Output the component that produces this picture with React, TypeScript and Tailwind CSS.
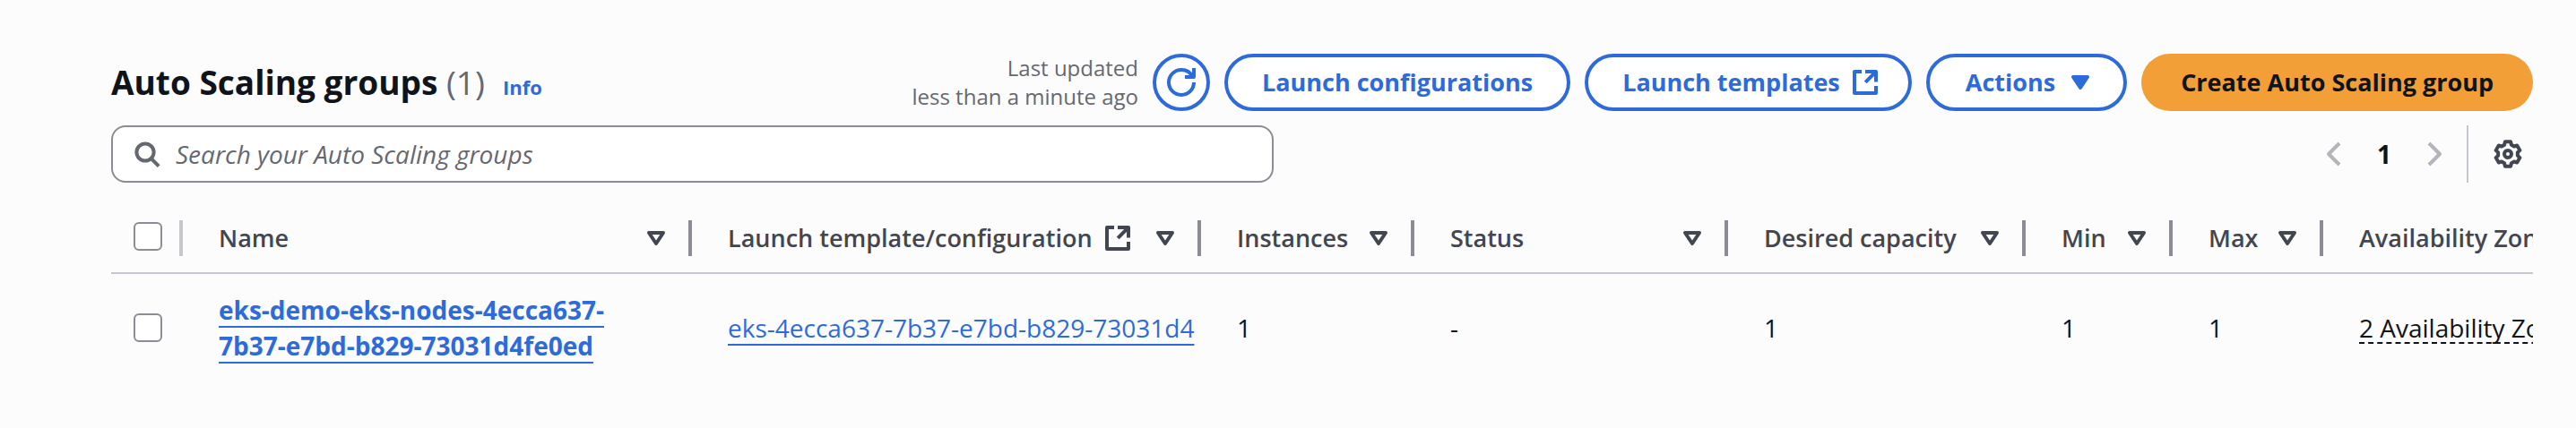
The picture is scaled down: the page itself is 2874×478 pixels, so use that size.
import type { ReactNode } from "react";

function Icon({ children, className = "" }: { children: ReactNode; className?: string }) {
  return (
    <svg
      viewBox="0 0 16 16"
      className={`size-8 shrink-0 ${className}`}
      fill="none"
      stroke="currentColor"
      strokeWidth="2"
      aria-hidden="true"
    >
      {children}
    </svg>
  );
}

const ExternalIcon = () => (
  <Icon>
    <path d="M6 2H2v12h12v-4M8 2h6v5.7M14 2 8.1 7.9" strokeLinejoin="round" />
  </Icon>
);

const RefreshIcon = () => (
  <Icon>
    <path d="M10 5h5V0" strokeLinejoin="round" />
    <path d="M15 8a6.957 6.957 0 0 1-7 7 6.957 6.957 0 0 1-7-7 6.957 6.957 0 0 1 7-7 6.87 6.87 0 0 1 6.3 4" />
  </Icon>
);

const SearchIcon = () => (
  <Icon>
    <circle cx="7" cy="7" r="4.8" />
    <path d="m14.6 14.8-4.3-4.3" />
  </Icon>
);

const CaretFilled = () => (
  <Icon>
    <path d="M4 5h8l-4 6-4-6Z" fill="currentColor" strokeLinejoin="round" />
  </Icon>
);

const CaretOutline = () => (
  <Icon>
    <path d="M4 5h8l-4 6-4-6Z" strokeLinejoin="round" />
  </Icon>
);

const GEAR_POINTS = [0, 60, 120, 180, 240, 300]
  .flatMap((lobe) =>
    [
      [5.5, -21],
      [7, -13],
      [7, 13],
      [5.5, 21],
    ].map(([radius, offset]) => {
      const angle = ((lobe + offset) * Math.PI) / 180;
      return `${(8 + radius * Math.sin(angle)).toFixed(2)},${(8 - radius * Math.cos(angle)).toFixed(2)}`;
    }),
  )
  .join(" ");

const GearIcon = () => (
  <Icon>
    <polygon points={GEAR_POINTS} strokeLinejoin="round" />
    <circle cx="8" cy="8" r="2" />
  </Icon>
);

const buttonBase = "flex h-16 items-center rounded-full text-[27px] font-bold whitespace-nowrap";
const outlined = "border-4 border-[#2e6bda] bg-white text-[#2e6bda]";

const checkbox = "block size-8 shrink-0 appearance-none rounded-md border-2 border-[#8c8c94] bg-white";

const columns = [
  { label: "Name", width: "w-[568px]" },
  { label: "Launch template/configuration", width: "w-[568px]", external: true },
  { label: "Instances", width: "w-[238px]" },
  { label: "Status", width: "w-[350px]" },
  { label: "Desired capacity", width: "w-[332px]" },
  { label: "Min", width: "w-[164px]" },
  { label: "Max", width: "w-[168px]" },
  { label: "Availability Zones", width: "w-[420px]" },
];

const cell = "py-5 pl-10 align-middle";

export default function App() {
  return (
    <main className="min-h-screen bg-[#fcfcfc] pt-[60px] pr-12 pb-12 pl-[124px] font-['Open_Sans','Noto_Sans',sans-serif] text-[28px] leading-10 text-[#0f141a]">
      <header className="flex items-center justify-between">
        <div className="flex items-baseline">
          <h1 className="text-[37px] leading-[48px] font-bold">
            Auto Scaling groups <span className="font-medium text-[#656871]">(1)</span>
          </h1>
          <a href="#info" className="ml-5 text-[22px] font-bold text-[#2e6bda]">
            Info
          </a>
        </div>
        <div className="flex items-center gap-4">
          <p className="text-right text-2xl leading-8 text-[#656871]">
            Last updated
            <br />
            less than a minute ago
          </p>
          <button type="button" aria-label="Refresh" className={`${buttonBase} ${outlined} w-16 justify-center`}>
            <RefreshIcon />
          </button>
          <button type="button" className={`${buttonBase} ${outlined} px-[38px]`}>
            Launch configurations
          </button>
          <button type="button" className={`${buttonBase} ${outlined} gap-3 pr-8 pl-[38px]`}>
            Launch templates
            <ExternalIcon />
          </button>
          <button type="button" className={`${buttonBase} ${outlined} gap-3 pr-8 pl-10`}>
            Actions
            <CaretFilled />
          </button>
          <button type="button" className={`${buttonBase} bg-[#f29f38] px-11`}>
            Create Auto Scaling group
          </button>
        </div>
      </header>

      <div className="mt-4 flex items-center justify-between">
        <label className="flex h-16 w-[48%] items-center gap-4 rounded-2xl border-2 border-[#8c8c94] bg-white px-[22px] text-[#656871]">
          <SearchIcon />
          <input
            type="text"
            aria-label="Search your Auto Scaling groups"
            placeholder="Search your Auto Scaling groups"
            className="min-w-0 flex-1 bg-transparent outline-none placeholder:text-[#656871] placeholder:italic"
          />
        </label>
        <div className="flex h-16 items-center pr-3">
          <button type="button" aria-label="Previous page" disabled className="text-[#b4b4bb]">
            <Icon>
              <path d="M11 2 5 8l6 6" strokeLinejoin="round" />
            </Icon>
          </button>
          <button type="button" className="w-20 text-center font-bold">
            1
          </button>
          <button type="button" aria-label="Next page" disabled className="text-[#b4b4bb]">
            <Icon>
              <path d="m5 2 6 6-6 6" strokeLinejoin="round" />
            </Icon>
          </button>
          <span className="mx-5 h-16 w-0.5 bg-[#c6c6cd]" />
          <button type="button" aria-label="Preferences" className="ml-2 text-[#424650]">
            <GearIcon />
          </button>
        </div>
      </div>

      <div className="overflow-x-auto [scrollbar-width:none]">
        <table className="w-max min-w-full table-fixed border-collapse text-left">
          <thead className="border-b-2 border-[#c6c6cd] text-[27px] text-[#424650]">
            <tr>
              <th className="w-20 pt-[42px] pb-[18px] pl-[25px]">
                <div className="flex h-10 justify-between">
                  <input type="checkbox" aria-label="Select all groups" className={`${checkbox} mt-0.5`} />
                  <span className="h-10 w-1 bg-[#c6c6cd]" />
                </div>
              </th>
              {columns.map((column, index) => (
                <th key={column.label} scope="col" className={`${column.width} pt-[42px] pb-[18px] pl-10 font-semibold`}>
                  <div className="flex items-center whitespace-nowrap">
                    <span>{column.label}</span>
                    {column.external && (
                      <a href="#launch-templates" aria-label="Open launch templates" className="ml-3">
                        <ExternalIcon />
                      </a>
                    )}
                    {index < columns.length - 1 && (
                      <>
                        <button type="button" aria-label={`Sort by ${column.label}`} className="mr-5 ml-auto">
                          <CaretOutline />
                        </button>
                        <span className="h-10 w-1 bg-[#8c8c94]" />
                      </>
                    )}
                  </div>
                </th>
              ))}
            </tr>
          </thead>
          <tbody>
            <tr>
              <td className="py-5 pl-[25px] align-middle">
                <input type="checkbox" aria-label="Select eks-demo-eks-nodes" className={checkbox} />
              </td>
              <td className={cell}>
                <a
                  href="#group"
                  className="font-bold text-[#2e6bda] underline decoration-2 underline-offset-[7px] [text-decoration-skip-ink:none]"
                >
                  eks-demo-eks-nodes-4ecca637-
                  <br />
                  7b37-e7bd-b829-73031d4fe0ed
                </a>
              </td>
              <td className={`${cell} whitespace-nowrap`}>
                <a
                  href="#template"
                  className="text-[#2e6bda] underline decoration-2 underline-offset-[7px] [text-decoration-skip-ink:none]"
                >
                  eks-4ecca637-7b37-e7bd-b829-73031d4
                </a>
              </td>
              <td className={cell}>1</td>
              <td className={cell}>-</td>
              <td className={cell}>1</td>
              <td className={cell}>1</td>
              <td className={cell}>1</td>
              <td className={`${cell} whitespace-nowrap`}>
                <span className="inline-block border-b-2 border-dashed border-[#0f141a] leading-8">
                  2 Availability Zones
                </span>
              </td>
            </tr>
          </tbody>
        </table>
      </div>
    </main>
  );
}
